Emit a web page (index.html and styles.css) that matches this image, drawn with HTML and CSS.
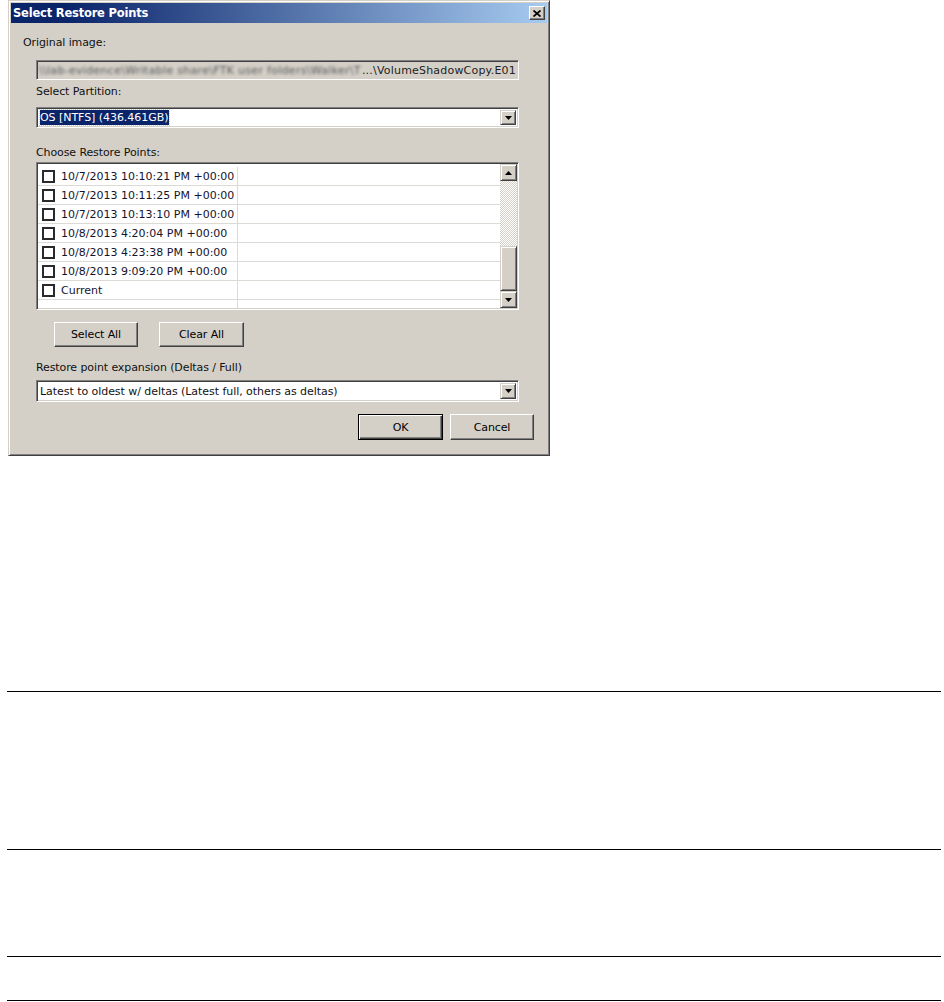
FILE: index.html
```html
<!DOCTYPE html>
<html lang="en">
<head>
  <meta charset="UTF-8" />
  <title>Select Restore Points</title>
  <link rel="stylesheet" href="styles.css">
</head>
<body>
  <div class="dialog">
    <div class="titlebar">
      <span class="title">Select Restore Points</span>
      <span class="close-btn">
        <svg width="8" height="7" viewBox="0 0 8 7"><path d="M0.5 0.5L7.5 6.5M7.5 0.5L0.5 6.5" stroke="#000" stroke-width="1.7"/></svg>
      </span>
    </div>

    <div class="content">
      <div class="label first">Original image:</div>
      <div class="field readonly">
        <span class="blurred">\\lab-evidence\Writable share\FTK user folders\Walker\T</span>
        <span class="path-end">...\VolumeShadowCopy.E01</span>
      </div>

      <div class="label partition">Select Partition:</div>
      <div class="field combo">
        <span class="value"><span class="selected">OS [NTFS] (436.461GB)</span></span>
        <span class="drop-btn"><svg width="7" height="4" viewBox="0 0 7 4"><polygon points="0,0 7,0 3.5,4" fill="#000"/></svg></span>
      </div>

      <div class="label points">Choose Restore Points:</div>
      <div class="list">
        <div class="rows">
          <div class="row"><span class="cell"><span class="check"></span>10/7/2013 10:10:21 PM +00:00</span><span class="cell"></span></div>
          <div class="row"><span class="cell"><span class="check"></span>10/7/2013 10:11:25 PM +00:00</span><span class="cell"></span></div>
          <div class="row"><span class="cell"><span class="check"></span>10/7/2013 10:13:10 PM +00:00</span><span class="cell"></span></div>
          <div class="row"><span class="cell"><span class="check"></span>10/8/2013 4:20:04 PM +00:00</span><span class="cell"></span></div>
          <div class="row"><span class="cell"><span class="check"></span>10/8/2013 4:23:38 PM +00:00</span><span class="cell"></span></div>
          <div class="row"><span class="cell"><span class="check"></span>10/8/2013 9:09:20 PM +00:00</span><span class="cell"></span></div>
          <div class="row"><span class="cell"><span class="check"></span>Current</span><span class="cell"></span></div>
          <div class="row"><span class="cell"></span><span class="cell"></span></div>
        </div>
        <div class="scrollbar">
          <span class="sb-btn"><svg width="7" height="4" viewBox="0 0 7 4"><polygon points="0,4 7,4 3.5,0" fill="#000"/></svg></span>
          <span class="track"></span>
          <span class="thumb"></span>
          <span class="sb-btn"><svg width="7" height="4" viewBox="0 0 7 4"><polygon points="0,0 7,0 3.5,4" fill="#000"/></svg></span>
        </div>
      </div>

      <div class="btn-row">
        <button class="btn select-all">Select All</button>
        <button class="btn clear-all">Clear All</button>
      </div>

      <div class="label expansion">Restore point expansion (Deltas / Full)</div>
      <div class="field combo tall">
        <span class="value">Latest to oldest w/ deltas (Latest full, others as deltas)</span>
        <span class="drop-btn"><svg width="7" height="4" viewBox="0 0 7 4"><polygon points="0,0 7,0 3.5,4" fill="#000"/></svg></span>
      </div>

      <div class="footer">
        <button class="btn default">OK</button>
        <button class="btn">Cancel</button>
      </div>
    </div>
  </div>

  <div class="band band-1"></div>
  <div class="band band-2"></div>
  <div class="band band-3"></div>
  <div class="band band-4"></div>
</body>
</html>
```

FILE: styles.css
```css
body {
  margin: 0;
  background: #fff;
  font-family: "DejaVu Sans", Tahoma, sans-serif;
  font-size: 11px;
  color: #000;
}

.dialog {
  box-sizing: border-box;
  margin-left: 8px;
  width: 542px;
  height: 456px;
  padding: 2px;
  background: #d4d0c8;
  border: 1px solid;
  border-color: #d4d0c8 #404040 #404040 #d4d0c8;
  box-shadow: inset 1px 1px #fff, inset -1px -1px #808080;
  display: flex;
  flex-direction: column;
}

.titlebar {
  height: 20px;
  padding: 0 2px 0 2px;
  background: linear-gradient(to right, #0a246a 10%, #a6caf0);
  display: flex;
  align-items: center;
  justify-content: space-between;
}

.title {
  color: #fff;
  font-weight: bold;
  font-size: 11.5px;
  letter-spacing: -0.2px;
}

.close-btn {
  box-sizing: border-box;
  width: 16px;
  height: 14px;
  background: #d4d0c8;
  border: 1px solid;
  border-color: #fff #404040 #404040 #fff;
  box-shadow: inset -1px -1px #808080;
  display: flex;
  align-items: center;
  justify-content: center;
}

.content {
  padding-left: 25px;
  display: flex;
  flex-direction: column;
  align-items: flex-start;
  color: #111;
}

.label {
  line-height: 14px;
  letter-spacing: -0.1px;
}

.label.first {
  margin: 13px 0 0 -13px;
}

.label.partition {
  margin-top: 5px;
}

.label.points {
  margin-top: 18px;
}

.label.expansion {
  margin-top: 14px;
}

/* sunken 3d box */
.field {
  box-sizing: border-box;
  width: 483px;
  height: 20px;
  margin-top: 10px;
  border: 1px solid;
  border-color: #808080 #fff #fff #808080;
  box-shadow: inset 1px 1px #404040, inset -1px -1px #d4d0c8;
  display: flex;
  align-items: center;
  overflow: hidden;
  white-space: nowrap;
}

.field.readonly {
  background: #d4d0c8;
  padding: 0 2px 0 2px;
  color: #222;
}

.blurred {
  flex: 1;
  overflow: hidden;
  color: #555;
  letter-spacing: 0.3px;
  filter: blur(1.4px);
}

.path-end {
  letter-spacing: 0.2px;
}

.field.combo {
  background: #fff;
  height: 21px;
  margin-top: 8px;
  padding: 2px;
}

.field.combo.tall {
  height: 22px;
  margin-top: 5px;
}

.value {
  flex: 1;
  padding-left: 1px;
  letter-spacing: -0.05px;
}

.selected {
  background: #0a246a;
  color: #fff;
  outline: 1px dotted #d4d0c8;
  padding: 1px 1px 1px 0;
}

.drop-btn,
.sb-btn {
  box-sizing: border-box;
  width: 16px;
  height: 100%;
  background: #d4d0c8;
  border: 1px solid;
  border-color: #d4d0c8 #404040 #404040 #d4d0c8;
  box-shadow: inset 1px 1px #fff, inset -1px -1px #808080;
  display: flex;
  align-items: center;
  justify-content: center;
}

.list {
  box-sizing: border-box;
  width: 483px;
  height: 148px;
  margin-top: 2px;
  background: #fff;
  border: 1px solid;
  border-color: #808080 #fff #fff #808080;
  box-shadow: inset 1px 1px #404040, inset -1px -1px #d4d0c8;
  padding: 1px;
  display: flex;
}

.rows {
  flex: 1;
  padding-top: 3px;
  overflow: hidden;
}

.row {
  height: 18px;
  border-bottom: 1px solid #dcdad5;
  display: flex;
  color: #14142e;
}

.cell {
  display: flex;
  align-items: center;
  white-space: nowrap;
}

.cell:first-child {
  width: 200px;
  padding-left: 4px;
  box-sizing: border-box;
  border-right: 1px solid #dcdad5;
}

.check {
  box-sizing: border-box;
  width: 13px;
  height: 13px;
  margin-right: 6px;
  border: 2px solid #2a2a2a;
  background: #fff;
}

.scrollbar {
  width: 17px;
  display: flex;
  flex-direction: column;
}

.sb-btn {
  width: 17px;
  height: 17px;
  flex: none;
}

.track {
  height: 65px;
  background: repeating-conic-gradient(#fff 0 25%, #d4d0c8 0 50%) 0 0 / 2px 2px;
}

.thumb {
  flex: 1;
  box-sizing: border-box;
  background: #d4d0c8;
  border: 1px solid;
  border-color: #d4d0c8 #404040 #404040 #d4d0c8;
  box-shadow: inset 1px 1px #fff, inset -1px -1px #808080;
}

.btn {
  box-sizing: border-box;
  height: 25px;
  width: 84px;
  font-family: inherit;
  font-size: 11px;
  letter-spacing: -0.1px;
  color: #000;
  background: #d4d0c8;
  border: 1px solid;
  border-color: #fff #404040 #404040 #fff;
  box-shadow: inset -1px -1px #808080;
  padding: 0;
}

.btn-row {
  margin: 12px 0 0 18px;
  display: flex;
  gap: 21px;
}

.clear-all {
  width: 85px;
}

.footer {
  align-self: stretch;
  margin: 12px 13px 0 0;
  display: flex;
  justify-content: flex-end;
  gap: 7px;
}

.footer .btn {
  height: 26px;
  width: 84px;
}

.footer .btn.default {
  width: 85px;
  border: 1px solid #000;
  box-shadow: inset 1px 1px #fff, inset -1px -1px #404040, inset -2px -2px #808080;
}

/* document rules below the figure */
.band {
  margin: 0 3px 0 7px;
  border-bottom: 1px solid #000;
}

.band-1 {
  height: 235px;
}

.band-2 {
  height: 157px;
}

.band-3 {
  height: 106px;
}

.band-4 {
  height: 43px;
}
```
